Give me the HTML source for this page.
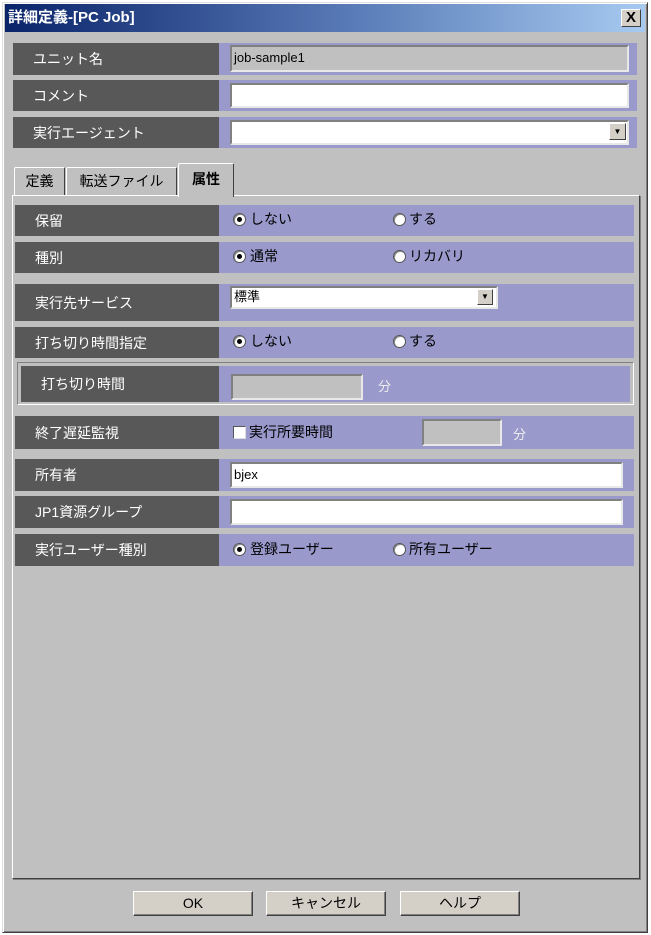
<!DOCTYPE html>
<html><head><meta charset="utf-8"><style>
*{box-sizing:border-box;margin:0;padding:0}
body{width:651px;height:935px;background:#fff;position:relative;overflow:hidden;font-family:"Liberation Sans","Noto Sans CJK JP",sans-serif;font-size:14px;color:#000}
.a{position:absolute}
.win{left:2px;top:2px;width:646px;height:931px;background:#c0c0c0;border:1px solid;border-color:#dfdfdf #404040 #404040 #dfdfdf;box-shadow:inset 1px 1px #fff,inset -1px -1px #808080}
.title{left:5px;top:4px;width:640px;height:28px;background:linear-gradient(90deg,#0a246a,#5a7cb8 55%,#a6caf0);color:#fff;font-weight:bold;font-size:15px;line-height:28px;padding-left:3px}
.close{left:621px;top:9px;width:20px;height:18px;background:#d4d0c8;border:1px solid;border-color:#fff #404040 #404040 #fff;font-weight:bold;font-size:15px;line-height:15px;text-align:center;color:#000}
.lab{background:#585858;color:#fff;font-size:14px;padding-left:20px;display:flex;align-items:center}
.val{background:#9999cc}
.in{background:#fff;border:2px solid;border-color:#808080 #e8e8e8 #e8e8e8 #808080;font-size:13px;line-height:18px;padding-left:2px}
.gray{background:#c0c0c0}
.dd{width:17px;height:17px;background:#d4d0c8;border:1px solid;border-color:#fff #404040 #404040 #fff;font-size:8px;line-height:15px;text-align:center}
.rad{width:13px;height:13px;border-radius:50%;background:#fff;border:1px solid #555;box-shadow:inset 1px 1px #888}
.rad.on::after{content:"";position:absolute;left:3px;top:3px;width:5px;height:5px;border-radius:50%;background:#000}
.t{font-size:14px;line-height:16px;color:#000}
.tab{background:#c0c0c0;border:1px solid;border-color:#fff #404040 transparent #fff;border-bottom:none;font-size:14px;text-align:center;line-height:26px;border-radius:2px 2px 0 0}
.panel{left:12px;top:195px;width:628px;height:684px;border:1px solid;border-color:#fff #404040 #404040 #fff;box-shadow:1px 1px #808080}
.btn{top:891px;width:120px;height:25px;background:#d4d0c8;border:1px solid;border-color:#fff #404040 #404040 #fff;box-shadow:inset -1px -1px #808080;text-align:center;line-height:23px;font-size:14px}
</style></head><body>
<div class="a win"></div>
<div class="a title">詳細定義-[PC Job]</div>
<div class="a close">X</div>

<div class="a lab" style="left:13px;top:43px;width:206px;height:32px">ユニット名</div>
<div class="a val" style="left:219px;top:43px;width:418px;height:32px"></div>
<div class="a in gray" style="left:230px;top:45px;width:399px;height:27px;line-height:22px">job-sample1</div>

<div class="a lab" style="left:13px;top:80px;width:206px;height:31px">コメント</div>
<div class="a val" style="left:219px;top:80px;width:418px;height:31px"></div>
<div class="a in" style="left:230px;top:83px;width:399px;height:25px"></div>

<div class="a lab" style="left:13px;top:117px;width:206px;height:31px">実行エージェント</div>
<div class="a val" style="left:219px;top:117px;width:418px;height:31px"></div>
<div class="a in" style="left:230px;top:120px;width:399px;height:25px"></div>
<div class="a dd" style="left:609px;top:123px">▼</div>

<div class="a panel"></div>
<div class="a tab" style="left:14px;top:167px;width:51px;height:28px">定義</div>
<div class="a tab" style="left:66px;top:167px;width:111px;height:28px">転送ファイル</div>
<div class="a tab" style="left:178px;top:163px;width:56px;height:34px;font-weight:bold;line-height:30px;border-bottom:none;background:#c0c0c0">属性</div>

<div class="a lab" style="left:15px;top:205px;width:204px;height:31px">保留</div>
<div class="a val" style="left:219px;top:205px;width:415px;height:31px"></div>
<div class="a rad on" style="left:233px;top:213px"></div><div class="a t" style="left:250px;top:211px">しない</div>
<div class="a rad" style="left:393px;top:213px"></div><div class="a t" style="left:409px;top:211px">する</div>

<div class="a lab" style="left:15px;top:242px;width:204px;height:31px">種別</div>
<div class="a val" style="left:219px;top:242px;width:415px;height:31px"></div>
<div class="a rad on" style="left:233px;top:250px"></div><div class="a t" style="left:250px;top:248px">通常</div>
<div class="a rad" style="left:393px;top:250px"></div><div class="a t" style="left:409px;top:248px">リカバリ</div>

<div class="a lab" style="left:15px;top:284px;width:204px;height:37px">実行先サービス</div>
<div class="a val" style="left:219px;top:284px;width:415px;height:37px"></div>
<div class="a in" style="left:230px;top:286px;width:268px;height:23px;line-height:17px">標準</div>
<div class="a dd" style="left:477px;top:289px;width:16px;height:16px;line-height:14px">▼</div>

<div class="a lab" style="left:15px;top:327px;width:204px;height:31px">打ち切り時間指定</div>
<div class="a val" style="left:219px;top:327px;width:415px;height:31px"></div>
<div class="a rad on" style="left:233px;top:335px"></div><div class="a t" style="left:250px;top:333px">しない</div>
<div class="a rad" style="left:393px;top:335px"></div><div class="a t" style="left:409px;top:333px">する</div>

<div class="a" style="left:17px;top:362px;width:617px;height:43px;border:1px solid;border-color:#808080 #fff #fff #808080"></div>
<div class="a lab" style="left:21px;top:366px;width:198px;height:36px">打ち切り時間</div>
<div class="a val" style="left:219px;top:366px;width:411px;height:36px"></div>
<div class="a in gray" style="left:231px;top:374px;width:132px;height:26px"></div>
<div class="a t" style="left:378px;top:379px;color:#eee;font-size:13px">分</div>

<div class="a lab" style="left:15px;top:416px;width:204px;height:33px">終了遅延監視</div>
<div class="a val" style="left:219px;top:416px;width:415px;height:33px"></div>
<div class="a" style="left:233px;top:426px;width:13px;height:13px;background:#fff;border:1px solid;border-color:#555 #ddd #ddd #555"></div>
<div class="a t" style="left:249px;top:424px">実行所要時間</div>
<div class="a in gray" style="left:422px;top:419px;width:80px;height:27px"></div>
<div class="a t" style="left:513px;top:427px;color:#eee;font-size:13px">分</div>

<div class="a lab" style="left:15px;top:459px;width:204px;height:32px">所有者</div>
<div class="a val" style="left:219px;top:459px;width:415px;height:32px"></div>
<div class="a in" style="left:230px;top:462px;width:393px;height:26px;line-height:21px">bjex</div>

<div class="a lab" style="left:15px;top:496px;width:204px;height:32px">JP1資源グループ</div>
<div class="a val" style="left:219px;top:496px;width:415px;height:32px"></div>
<div class="a in" style="left:230px;top:499px;width:393px;height:26px"></div>

<div class="a lab" style="left:15px;top:534px;width:204px;height:32px">実行ユーザー種別</div>
<div class="a val" style="left:219px;top:534px;width:415px;height:32px"></div>
<div class="a rad on" style="left:233px;top:543px"></div><div class="a t" style="left:250px;top:541px">登録ユーザー</div>
<div class="a rad" style="left:393px;top:543px"></div><div class="a t" style="left:409px;top:541px">所有ユーザー</div>

<div class="a btn" style="left:133px">OK</div>
<div class="a btn" style="left:266px">キャンセル</div>
<div class="a btn" style="left:400px">ヘルプ</div>
</body></html>
